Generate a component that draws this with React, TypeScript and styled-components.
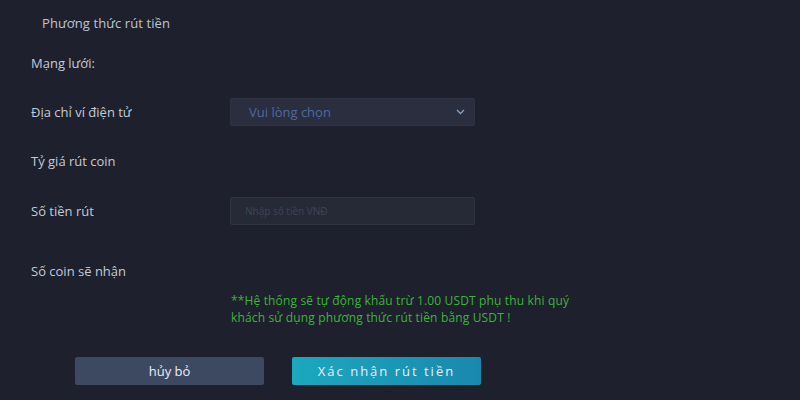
import React from "react";
import styled, { createGlobalStyle } from "styled-components";

const GlobalStyle = createGlobalStyle`
  html, body {
    margin: 0;
    padding: 0;
    background: #1f202d;
  }
  body {
    font-family: "Open Sans", "Liberation Sans", sans-serif;
  }
`;

const Root = styled.div`
  width: 800px;
  height: 400px;
  box-sizing: border-box;
  padding-left: 31px;
  display: flex;
  flex-direction: column;
  background: #1f202d;
  color: #c3cad8;
  overflow: hidden;
`;

const Title = styled.div`
  height: 46px;
  display: flex;
  align-items: center;
  padding-left: 11px;
  font-size: 13px;
  letter-spacing: 0.1px;
  color: #bcc5d6;
`;

const Row = styled.div<{ $h: number; $mt?: number }>`
  height: ${(p) => p.$h}px;
  margin-top: ${(p) => p.$mt || 0}px;
  display: grid;
  grid-template-columns: 199px 245px;
  align-items: center;
`;

const Label = styled.div`
  font-size: 13px;
  color: #c3cad8;
`;

const Select = styled.div`
  height: 28px;
  box-sizing: border-box;
  display: flex;
  align-items: center;
  justify-content: space-between;
  padding: 0 9px 0 18px;
  background: #2a2e3e;
  border: 1px solid #2f3344;
  border-radius: 2px;
  font-size: 13px;
  color: #5069a0;
`;

const Input = styled.div`
  height: 28px;
  box-sizing: border-box;
  display: flex;
  align-items: center;
  padding: 0 14px;
  background: #262a37;
  border: 1px solid #2f3443;
  border-radius: 2px;
  font-size: 10px;
  color: #3e4558;
`;

const Note = styled.div`
  margin-top: 4px;
  padding-left: 200px;
  font-size: 12px;
  line-height: 17px;
  letter-spacing: 0.15px;
  color: #3cb43c;
`;

const Buttons = styled.div`
  margin-top: 31px;
  padding-left: 44px;
  display: flex;
  gap: 28px;
`;

const Button = styled.button<{ $primary?: boolean }>`
  width: 189px;
  height: 28px;
  border: none;
  border-radius: 2px;
  font-family: inherit;
  font-size: 13px;
  color: #e8eef6;
  letter-spacing: ${(p) => (p.$primary ? "2px" : "0")};
  background: ${(p) =>
    p.$primary ? "linear-gradient(to right, #1ca8bf, #1a88ad)" : "#3c4961"};
  cursor: pointer;
`;

const Chevron = () => (
  <svg width="9" height="6" viewBox="0 0 9 6" fill="none">
    <path d="M1 1l3.5 3.5L8 1" stroke="#8aa0c2" strokeWidth="1.3" />
  </svg>
);

export default function App() {
  return (
    <Root>
      <GlobalStyle />
      <Title>Phương thức rút tiền</Title>
      <Row $h={34}>
        <Label>Mạng lưới:</Label>
      </Row>
      <Row $h={64}>
        <Label>Địa chỉ ví điện tử</Label>
        <Select>
          <span>Vui lòng chọn</span>
          <Chevron />
        </Select>
      </Row>
      <Row $h={34}>
        <Label>Tỷ giá rút coin</Label>
      </Row>
      <Row $h={66}>
        <Label>Số tiền rút</Label>
        <Input>Nhập số tiền VNĐ</Input>
      </Row>
      <Row $h={34} $mt={10}>
        <Label>Số coin sẽ nhận</Label>
      </Row>
      <Note>
        **Hệ thống sẽ tự động khấu trừ 1.00 USDT phụ thu khi quý
        <br />
        khách sử dụng phương thức rút tiền bằng USDT !
      </Note>
      <Buttons>
        <Button>hủy bỏ</Button>
        <Button $primary>Xác nhận rút tiền</Button>
      </Buttons>
    </Root>
  );
}
